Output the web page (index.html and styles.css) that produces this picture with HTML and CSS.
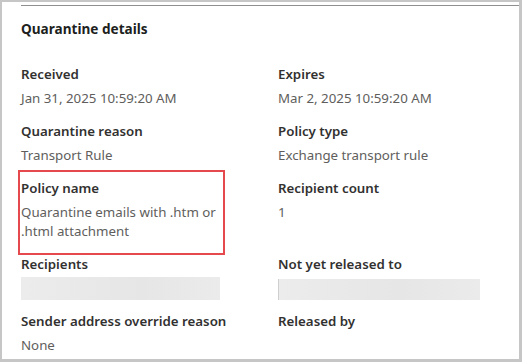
FILE: index.html
```html
<!DOCTYPE html>
<html lang="en">
<head>
  <meta charset="UTF-8">
  <title>Quarantine details</title>
  <link rel="stylesheet" href="styles.css">
</head>
<body>
  <div class="frame">
    <div class="panel">
      <h2>Quarantine details</h2>

      <div class="details">
        <div class="field">
          <div class="label">Received</div>
          <div class="value">Jan 31, 2025 10:59:20 AM</div>
        </div>
        <div class="field">
          <div class="label">Expires</div>
          <div class="value">Mar 2, 2025 10:59:20 AM</div>
        </div>

        <div class="field">
          <div class="label">Quarantine reason</div>
          <div class="value">Transport Rule</div>
        </div>
        <div class="field">
          <div class="label">Policy type</div>
          <div class="value">Exchange transport rule</div>
        </div>

        <!-- highlighted field -->
        <div class="field highlight">
          <div class="label">Policy name</div>
          <div class="value">Quarantine emails with .htm or .html attachment</div>
        </div>
        <div class="field">
          <div class="label">Recipient count</div>
          <div class="value">1</div>
        </div>

        <div class="field">
          <div class="label">Recipients</div>
          <div class="redacted"></div>
        </div>
        <div class="field">
          <div class="label">Not yet released to</div>
          <div class="redacted right"></div>
        </div>

        <div class="field">
          <div class="label">Sender address override reason</div>
          <div class="value">None</div>
        </div>
        <div class="field">
          <div class="label">Released by</div>
        </div>
      </div>
    </div>
  </div>
</body>
</html>
```

FILE: styles.css
```css
body {
  margin: 0;
  font-family: "Noto Sans", "Open Sans", sans-serif;
  background: #ffffff;
}

.frame {
  width: 522px;
  height: 362px;
  box-sizing: border-box;
  border-style: solid;
  border-color: #c6c6c6;
  border-width: 2px 3px 3px 2px;
  padding-top: 3px;
  overflow: hidden;
}

.panel {
  margin-left: 19px;
  border-top: 1px solid #8f8f8f;
}

h2 {
  margin: 13px 0 25px;
  font-size: 13.6px;
  line-height: 20px;
  font-weight: 700;
  color: #201f1e;
}

.details {
  display: grid;
  grid-template-columns: 257px 1fr;
  row-gap: 13px;
}

.field {
  position: relative;
}

.label {
  font-size: 13.3px;
  line-height: 20px;
  font-weight: 600;
  color: #323130;
}

.value {
  margin-top: 5px;
  font-size: 13.3px;
  line-height: 19px;
  color: #605e5c;
  width: 200px;
}

/* red annotation box round the policy name */
.highlight::after {
  content: "";
  position: absolute;
  left: -3px;
  top: -8px;
  width: 203px;
  height: 81px;
  border: 2px solid #e5484d;
}

.redacted {
  margin-top: 3px;
  margin-bottom: -2px;
  width: 199px;
  height: 23px;
  background: linear-gradient(90deg, #ececec, #e6e6e6 60%, #ebebeb);
}

.redacted.right {
  width: 201px;
  margin-top: 5px;
  height: 21px;
  border-left: 1px solid #cfcfcf;
}
```
